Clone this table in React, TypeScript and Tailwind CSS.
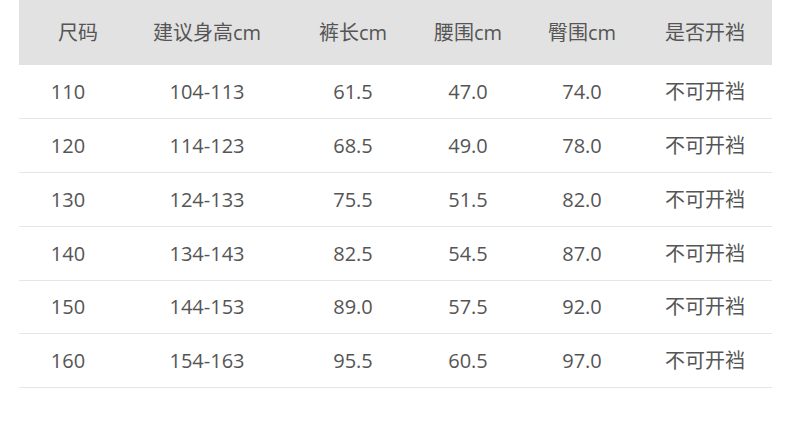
const headers = ["尺码", "建议身高cm", "裤长cm", "腰围cm", "臀围cm", "是否开裆"];

const rows = [
  ["110", "104-113", "61.5", "47.0", "74.0", "不可开裆"],
  ["120", "114-123", "68.5", "49.0", "78.0", "不可开裆"],
  ["130", "124-133", "75.5", "51.5", "82.0", "不可开裆"],
  ["140", "134-143", "82.5", "54.5", "87.0", "不可开裆"],
  ["150", "144-153", "89.0", "57.5", "92.0", "不可开裆"],
  ["160", "154-163", "95.5", "60.5", "97.0", "不可开裆"],
];

const grid = "grid grid-cols-[118px_140px_152px_78px_150px_96px_1fr] items-center";

export default function App() {
  return (
    <div
      className="w-[790px] h-[431px] bg-white px-[19px] pr-[18px] text-[20px] text-[#555555]"
      style={{ fontFamily: '"Open Sans", "Noto Sans CJK SC", sans-serif' }}
    >
      <div className={`${grid} h-[65px] bg-[#e2e2e2]`}>
        {headers.map((h) => (
          <div key={h} className="text-center whitespace-nowrap">
            {h}
          </div>
        ))}
        <div />
      </div>
      {rows.map((row, i) => (
        <div
          key={row[0]}
          className={`${grid} border-b border-[#e6e6e6] ${i === 4 ? "h-[53px]" : "h-[54px]"}`}
        >
          {row.map((cell, j) => (
            <div key={j} className={`text-center whitespace-nowrap ${j === 0 ? "pr-[20px]" : ""}`}>
              {cell}
            </div>
          ))}
          <div />
        </div>
      ))}
    </div>
  );
}
